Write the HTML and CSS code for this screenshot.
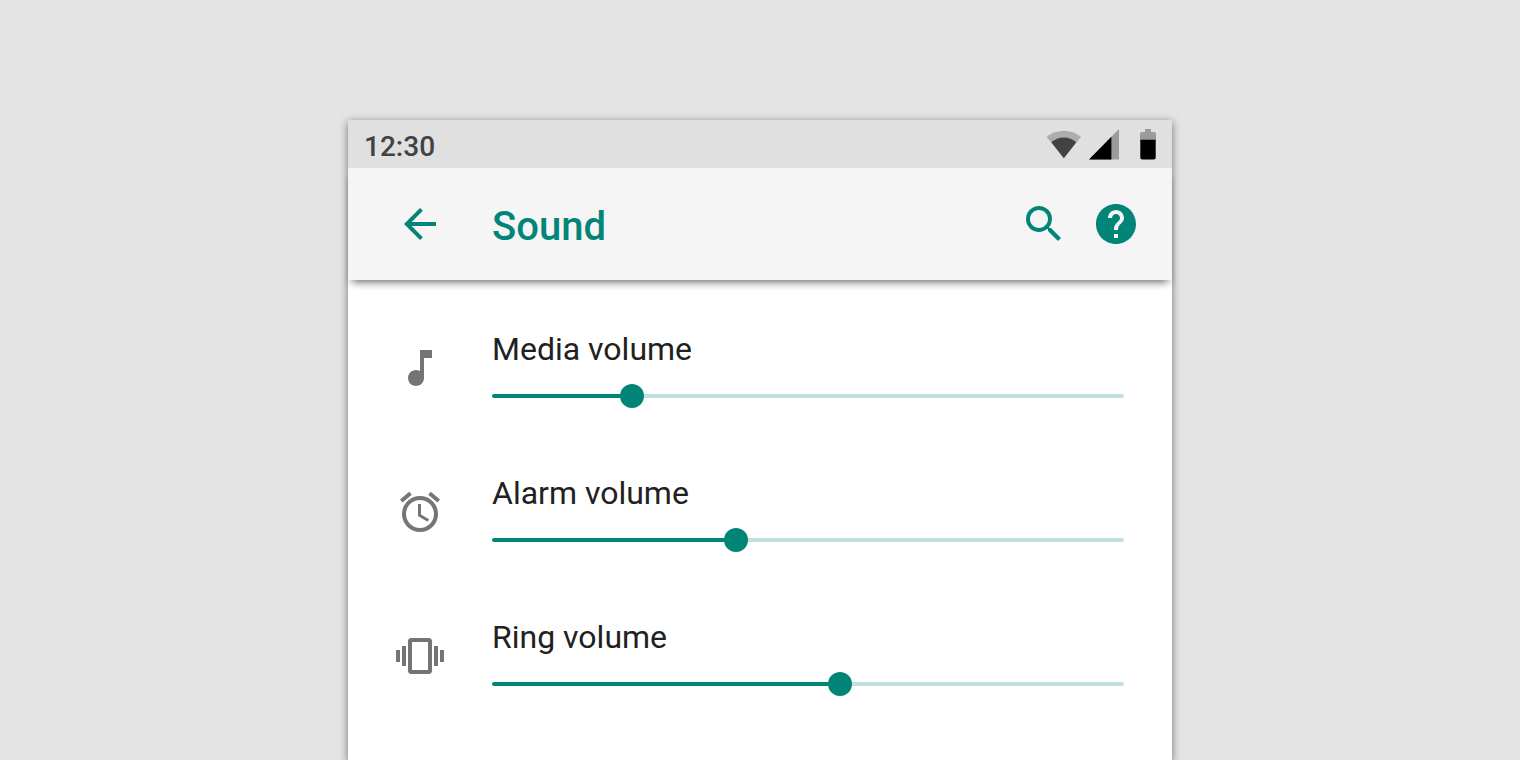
FILE: index.html
```html
<!DOCTYPE html>
<html lang="en">
  <head>
    <meta charset="UTF-8" />
    <meta name="viewport" content="width=device-width, initial-scale=1.0" />
    <title>Sound</title>
    <link rel="stylesheet" href="styles.css">
  </head>
  <body>
    <div class="phone">
      <div class="status-bar">
        <span class="time">12:30</span>
        <svg class="wifi" width="36" height="32" viewBox="0 0 36 32">
          <path fill="#adadad" d="M17.8 30.3L.6 8.7a27.5 27.5 0 0 1 34.4 0z" />
          <path fill="#424242" d="M17.8 30.3L5.3 14.3a19 19 0 0 1 25 0z" />
        </svg>
        <svg class="signal" width="32" height="32" viewBox="0 0 32 32">
          <path fill="#9b9b9b" d="M1 31.5L31 1v30.5z" />
          <path d="M1 31.5L23.4 8.8v22.7z" />
        </svg>
        <svg class="battery" width="16" height="32" viewBox="0 0 16 32">
          <path fill="#9b9b9b" d="M5 1h6v3h3q2 0 2 2v7H0V6q0-2 2-2h3z" />
          <path d="M.3 11.7h15.4v17.8q0 2-2 2H2.3q-2 0-2-2z" />
        </svg>
      </div>
      <header class="app-bar">
        <button class="icon-btn" type="button" aria-label="Back">
          <svg viewBox="0 0 24 24"><path d="M20 11H7.83l5.59-5.59L12 4l-8 8 8 8 1.41-1.41L7.83 13H20v-2z" /></svg>
        </button>
        <h1>Sound</h1>
        <button class="icon-btn" type="button" aria-label="Search">
          <svg viewBox="0 0 24 24"><path d="M15.5 14h-.79l-.28-.27A6.471 6.471 0 0 0 16 9.5 6.5 6.5 0 1 0 9.5 16c1.61 0 3.09-.59 4.23-1.57l.27.28v.79l5 4.99L20.49 19l-4.99-5zm-6 0C7.01 14 5 11.99 5 9.5S7.01 5 9.5 5 14 7.01 14 9.5 11.99 14 9.5 14z" /></svg>
        </button>
        <button class="icon-btn" type="button" aria-label="Help">
          <svg viewBox="0 0 24 24"><path d="M12 2C6.48 2 2 6.48 2 12s4.48 10 10 10 10-4.48 10-10S17.52 2 12 2zm1 17h-2v-2h2v2zm2.07-7.75l-.9.92C13.45 12.9 13 13.5 13 15h-2v-.5c0-1.1.45-2.1 1.17-2.83l1.24-1.26c.37-.36.59-.86.59-1.41 0-1.1-.9-2-2-2s-2 .9-2 2H8c0-2.21 1.79-4 4-4s4 1.79 4 4c0 .88-.36 1.68-.93 2.25z" /></svg>
        </button>
      </header>
      <main class="settings">
        <div class="setting">
          <svg class="setting-icon" viewBox="0 0 24 24"><path d="M12 3v10.55c-.59-.34-1.27-.55-2-.55-2.21 0-4 1.79-4 4s1.79 4 4 4 4-1.79 4-4V7h4V3h-6z" /></svg>
          <div class="control">
            <label for="media">Media volume</label>
            <input type="range" id="media" min="0" max="76" value="16" style="--value: 16" />
          </div>
        </div>
        <div class="setting">
          <svg class="setting-icon" viewBox="0 0 24 24"><path d="M22 5.72l-4.6-3.86-1.29 1.53 4.6 3.86L22 5.72zM7.88 3.39L6.6 1.86 2 5.71l1.29 1.53 4.59-3.85zM12.5 8H11v6l4.75 2.85.75-1.23-4-2.37V8zM12 4c-4.97 0-9 4.03-9 9s4.02 9 9 9a9 9 0 0 0 0-18zm0 16c-3.87 0-7-3.13-7-7s3.13-7 7-7 7 3.13 7 7-3.13 7-7 7z" /></svg>
          <div class="control">
            <label for="alarm">Alarm volume</label>
            <input type="range" id="alarm" min="0" max="76" value="29" style="--value: 29" />
          </div>
        </div>
        <div class="setting">
          <svg class="setting-icon" viewBox="0 0 24 24"><path d="M0 15h2V9H0v6zm3 2h2V7H3v10zm19-8v6h2V9h-2zm-3 8h2V7h-2v10zM16.500 3h-9C6.670 3 6 3.670 6 4.500v15c0 .83.67 1.500 1.500 1.500h9c.83 0 1.500-.67 1.500-1.500v-15c0-.83-.67-1.500-1.500-1.500zM16 19H8V5h8v14z" /></svg>
          <div class="control">
            <label for="ring">Ring volume</label>
            <input type="range" id="ring" min="0" max="76" value="42" style="--value: 42" />
          </div>
        </div>
      </main>
    </div>
    <script>
      const sliders = document.querySelectorAll('input[type="range"]');

      sliders.forEach(slider => {
        slider.addEventListener('input', function() {
          slider.style.setProperty('--value', slider.value);
        });
      });
    </script>
  </body>
</html>
```
FILE: styles.css
```css
* {
  margin: 0;
  padding: 0;
  box-sizing: border-box;
}
body {
  padding-top: 120px;
  background-color: #e4e4e4;
  font-family: Roboto, sans-serif;
}
svg {
  display: block;
}
.phone {
  max-width: 824px;
  min-height: calc(100vh - 120px);
  margin: 0 auto;
  background: white;
  box-shadow: 0 2px 8px rgba(0, 0, 0, 0.5);
}
.status-bar {
  display: flex;
  align-items: center;
  gap: 6px;
  height: 48px;
  padding: 0 16px;
  background: #e0e0e0;
}
.time {
  flex: 1;
  padding-top: 6px;
  font-size: 28px;
  font-weight: 500;
  line-height: 32px;
  color: #424242;
}
.battery {
  margin-left: 14px;
}
.app-bar {
  display: flex;
  align-items: center;
  gap: 24px;
  height: 112px;
  padding: 0 32px 0 48px;
  background: #f5f5f5;
  color: #008577;
  box-shadow: 0 6px 8px -4px rgba(0, 0, 0, 0.6);
}
h1 {
  flex: 1;
  padding: 6px 0 0 24px;
  font-size: 40px;
  font-weight: 500;
  line-height: 48px;
}
.icon-btn {
  width: 48px;
  height: 48px;
  border: none;
  background: none;
  color: inherit;
  cursor: pointer;
}
.icon-btn svg {
  width: 48px;
  height: 48px;
  fill: currentColor;
}
.settings {
  padding: 16px 48px;
}
.setting {
  display: flex;
  align-items: center;
  gap: 48px;
  height: 144px;
}
.setting-icon {
  flex: none;
  width: 48px;
  height: 48px;
  fill: #757575;
}
.control {
  flex: 1;
}
label {
  display: block;
  margin-bottom: 14px;
  font-size: 32px;
  line-height: 42px;
  color: #212121;
}
input[type='range'] {
  display: block;
  width: 100%;
  height: 24px;
  appearance: none;
  background: none;
  cursor: pointer;
}
input[type='range']::-webkit-slider-runnable-track {
  height: 4px;
  border-radius: 2px;
  background: linear-gradient(
    to right,
    #008577 calc(var(--value) / 76 * 100%),
    #bfe1dd calc(var(--value) / 76 * 100%)
  );
}
input[type='range']::-webkit-slider-thumb {
  appearance: none;
  width: 24px;
  height: 24px;
  margin-top: -10px;
  border-radius: 50%;
  background: #008577;
}
```
